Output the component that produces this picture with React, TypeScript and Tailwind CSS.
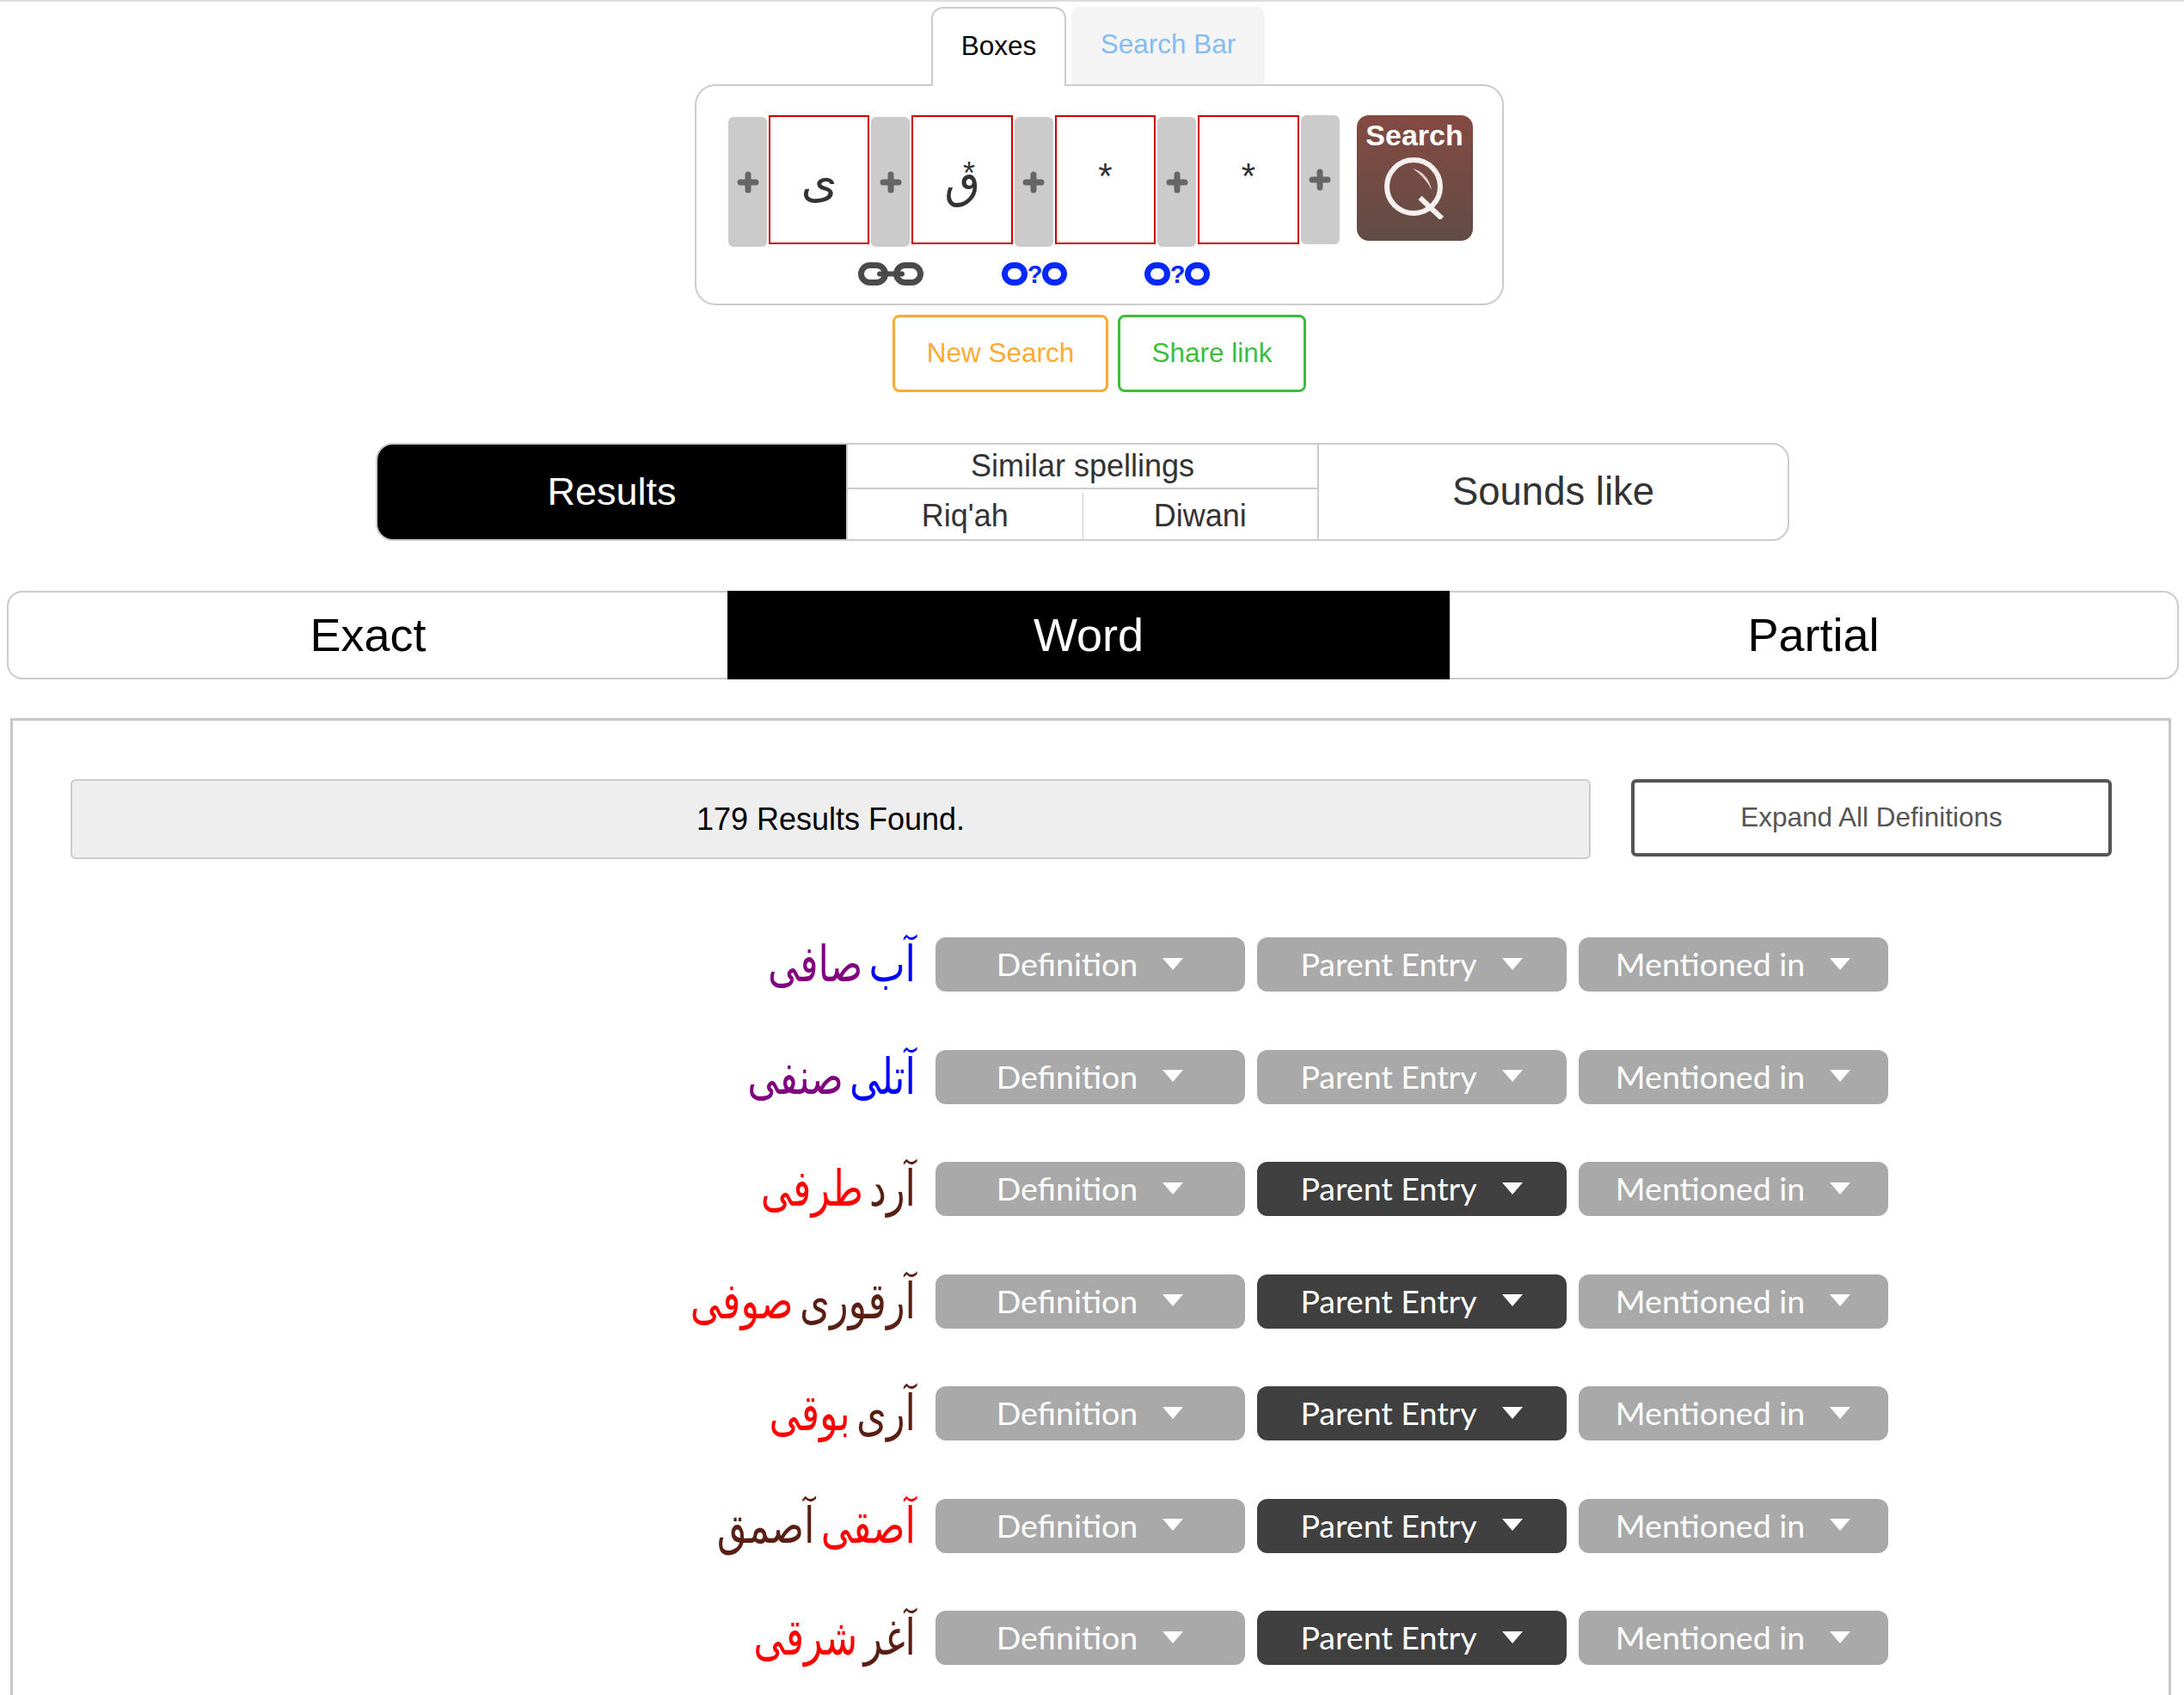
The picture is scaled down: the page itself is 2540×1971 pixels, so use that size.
const ROWS: { words: { text: string; color: string }[]; parentDark: boolean }[] = [
  { words: [{ text: 'آب', color: 'text-[#0000ff]' }, { text: 'صافی', color: 'text-[#800080]' }], parentDark: false },
  { words: [{ text: 'آتلی', color: 'text-[#0000ff]' }, { text: 'صنفی', color: 'text-[#800080]' }], parentDark: false },
  { words: [{ text: 'آرد', color: 'text-[#5a1f14]' }, { text: 'طرفی', color: 'text-[#ff0000]' }], parentDark: true },
  { words: [{ text: 'آرقوری', color: 'text-[#5a1f14]' }, { text: 'صوفی', color: 'text-[#ff0000]' }], parentDark: true },
  { words: [{ text: 'آری', color: 'text-[#5a1f14]' }, { text: 'بوقی', color: 'text-[#ff0000]' }], parentDark: true },
  { words: [{ text: 'آصقی', color: 'text-[#ff0000]' }, { text: 'آصمق', color: 'text-[#5a1f14]' }], parentDark: true },
  { words: [{ text: 'آغر', color: 'text-[#5a1f14]' }, { text: 'شرقی', color: 'text-[#ff0000]' }], parentDark: true },
];

function PlusButton({ tall = true }: { tall?: boolean }) {
  return (
    <div className={`flex w-[45px] shrink-0 items-center justify-center rounded-[6px] bg-[#cbcbcb] ${tall ? 'mt-[2px] h-[151px]' : 'h-[150px]'}`}>
      <svg width="26" height="26" viewBox="0 0 26 26">
        <path d="M13 4v18M4 13h18" stroke="#666" strokeWidth="7" strokeLinecap="round" />
      </svg>
    </div>
  );
}

function LetterBox({ letter, star, smallStar }: { letter?: string; star?: boolean; smallStar?: boolean }) {
  return (
    <div className="relative mx-[2px] h-[150px] w-[117.4px] shrink-0 border-2 border-[#cc0000] bg-white text-[#333]">
      {letter && (
        <span dir="rtl" className="absolute inset-x-0 top-[45px] text-center font-['DejaVu_Sans',sans-serif] text-[54px] leading-[60px]">
          {letter}
        </span>
      )}
      {star && (
        <span className="absolute inset-x-0 top-[49px] text-center text-[42px] leading-[40px]">*</span>
      )}
      {smallStar && (
        <span className="absolute inset-x-0 top-[46px] pl-[16px] text-center text-[36px] leading-[40px]">*</span>
      )}
    </div>
  );
}

function ChainIcon() {
  return (
    <svg width="76" height="27" viewBox="0 0 76 27">
      <rect x="3.5" y="3.5" width="28" height="20" rx="10" fill="none" stroke="#4a4a4a" strokeWidth="7" />
      <rect x="44.5" y="3.5" width="28" height="20" rx="10" fill="none" stroke="#4a4a4a" strokeWidth="7" />
      <path d="M25 13.5h26" stroke="#4a4a4a" strokeWidth="6" strokeLinecap="round" />
    </svg>
  );
}

function MaybeChainIcon() {
  return (
    <svg width="76" height="27" viewBox="0 0 76 27" className="overflow-visible">
      <rect x="3.5" y="3.5" width="23" height="20" rx="10" fill="none" stroke="#0528ff" strokeWidth="7" />
      <rect x="50.5" y="3.5" width="22" height="20" rx="10" fill="none" stroke="#0528ff" strokeWidth="7" />
      <text x="38.5" y="23.5" textAnchor="middle" fill="#0528ff" fontSize="29" fontWeight="700" fontFamily="Liberation Sans">?</text>
    </svg>
  );
}

function SearchGlass() {
  return (
    <svg width="76" height="72" viewBox="0 0 76 72" className="mt-[7px]">
      <circle cx="37" cy="34" r="31" fill="none" stroke="#f6f0ee" strokeWidth="6" />
      <path d="M44.5 47L70 71" stroke="#f6f0ee" strokeWidth="6" />
      <path d="M36 13c12 3 20 13 22 25c-5-10-12-18-22-25z" fill="#f6f0ee" opacity="0.85" />
    </svg>
  );
}

function DropButton({ label, dark }: { label: string; dark?: boolean }) {
  return (
    <div className={`flex h-[63px] w-[360px] items-center justify-center gap-[28px] rounded-[12px] font-['Lato',sans-serif] text-[37.5px] text-white ${dark ? 'bg-[#404040]' : 'bg-[#a9a9a9]'}`}>
      <span>{label}</span>
      <svg width="26" height="14" viewBox="0 0 26 14" className="-mt-[2px]">
        <path d="M1 0h24L13 14z" fill="#fff" />
      </svg>
    </div>
  );
}

export default function App() {
  return (
    <div className="h-[1971px] overflow-hidden bg-white font-['Liberation_Sans',Arial,sans-serif]">
      <div className="h-[2px] bg-[#ddd]" />

      <div className="relative z-10 ml-[1083px] mt-[6px] flex gap-[6px]">
        <div className="flex h-[92px] w-[157px] items-center justify-center rounded-t-[14px] border-2 border-b-0 border-[#ccc] bg-white pb-[3px] text-[31.5px] text-black">Boxes</div>
        <div className="flex h-[90px] w-[225px] items-center justify-center rounded-t-[10px] bg-[#f4f4f4] pb-[3px] text-[31.5px] text-[#85bcf0]">Search Bar</div>
      </div>

      <div className="ml-[808px] -mt-[2px] h-[257px] w-[941px] rounded-[24px] border-2 border-[#ccc] pl-[37px] pt-[34px]">
        <div className="flex items-start">
          <PlusButton />
          <LetterBox letter="ی" />
          <PlusButton />
          <LetterBox letter="ٯ" smallStar />
          <PlusButton />
          <LetterBox star />
          <PlusButton />
          <LetterBox star />
          <PlusButton tall={false} />
          <div className="ml-[20px] flex h-[146px] w-[135px] shrink-0 flex-col items-center rounded-[14px] bg-gradient-to-b from-[#844a42] to-[#614c45] pt-[4px] text-[34px] font-bold leading-[38px] text-white">
            <span>Search</span>
            <SearchGlass />
          </div>
        </div>
        <div className="ml-[151px] mt-[18px] flex gap-[90.5px]">
          <ChainIcon />
          <MaybeChainIcon />
          <MaybeChainIcon />
        </div>
      </div>

      <div className="ml-[1038px] mt-[11px] flex gap-[11px] text-[31.5px]">
        <div className="flex h-[90px] w-[251px] items-center justify-center rounded-[8px] border-[3px] border-[#ffaa33] text-[#ffaa33]">New Search</div>
        <div className="flex h-[90px] w-[219px] items-center justify-center rounded-[8px] border-[3px] border-[#3cbd3c] text-[#3cbd3c]">Share link</div>
      </div>

      <div className="ml-[437px] mt-[59px] flex h-[114px] w-[1644px] overflow-hidden rounded-[20px] border-2 border-[#ccc] text-[#333]">
        <div className="flex w-[545px] items-center justify-center bg-black text-[45px] text-white">Results</div>
        <div className="flex w-[550px] flex-col border-x-2 border-[#ccc] text-[36px]">
          <div className="flex h-[52px] items-center justify-center border-b-2 border-[#ccc]">Similar spellings</div>
          <div className="flex flex-1 pt-[4px]">
            <div className="flex flex-1 items-center justify-center border-r border-[#ccc]">Riq'ah</div>
            <div className="flex flex-1 items-center justify-center">Diwani</div>
          </div>
        </div>
        <div className="flex flex-1 items-center justify-center text-[45.5px]">Sounds like</div>
      </div>

      <div className="ml-[8px] mt-[58px] flex h-[103px] w-[2526px] rounded-[18px] border-2 border-[#ccc] text-[54px] text-black">
        <div className="flex w-[836px] items-center justify-center">Exact</div>
        <div className="-my-[2px] flex w-[840px] items-center justify-center bg-black text-white">Word</div>
        <div className="flex flex-1 items-center justify-center">Partial</div>
      </div>

      <div className="ml-[12px] mt-[45px] w-[2513px] border-[3px] border-[#c8c5c5] pb-[60px] pl-[67px] pt-[68px]">
        <div className="flex items-start">
          <div className="flex h-[93px] w-[1768px] items-center justify-center rounded-[6px] border-2 border-[#ccc] bg-[#eeeeee] text-[36px] text-black">179 Results Found.</div>
          <div className="ml-[47px] flex h-[90px] w-[559px] items-center justify-center rounded-[6px] border-[4px] border-[#555] text-[31.5px] text-[#555]">Expand All Definitions</div>
        </div>

        <div className="mt-[91px] flex flex-col gap-[67.5px]">
          {ROWS.map((row, i) => (
            <div key={i} className="flex h-[63px] items-center">
              <div dir="rtl" className="w-[983px] shrink-0 origin-right scale-x-[0.86] scale-y-[1.12] whitespace-nowrap font-['DejaVu_Sans',sans-serif] text-[52px] leading-[63px] [word-spacing:-8px]">
                {row.words.map((w, j) => (
                  <span key={j} className={w.color}>{w.text}{j === 0 ? ' ' : ''}</span>
                ))}
              </div>
              <div className="ml-[23px] flex gap-[14px]">
                <DropButton label="Definition" />
                <DropButton label="Parent Entry" dark={row.parentDark} />
                <DropButton label="Mentioned in" />
              </div>
            </div>
          ))}
        </div>
      </div>
    </div>
  );
}
